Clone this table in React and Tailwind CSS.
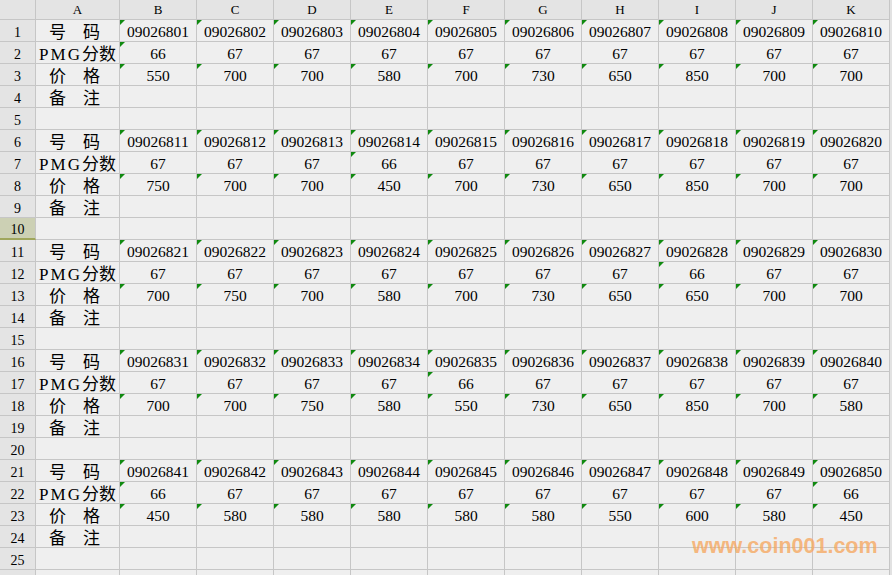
import React from "react";

const letters = ["A", "B", "C", "D", "E", "F", "G", "H", "I", "J", "K"];

// one block = 号码 / PMG分数 / 价格 / 备注 / blank
const blocks = [
  {
    start: 9026801,
    pmg: [66, 67, 67, 67, 67, 67, 67, 67, 67, 67],
    price: [550, 700, 700, 580, 700, 730, 650, 850, 700, 700],
  },
  {
    start: 9026811,
    pmg: [67, 67, 67, 66, 67, 67, 67, 67, 67, 67],
    price: [750, 700, 700, 450, 700, 730, 650, 850, 700, 700],
  },
  {
    start: 9026821,
    pmg: [67, 67, 67, 67, 67, 67, 67, 66, 67, 67],
    price: [700, 750, 700, 580, 700, 730, 650, 650, 700, 700],
  },
  {
    start: 9026831,
    pmg: [67, 67, 67, 67, 66, 67, 67, 67, 67, 67],
    price: [700, 700, 750, 580, 550, 730, 650, 850, 700, 580],
  },
  {
    start: 9026841,
    pmg: [66, 67, 67, 67, 67, 67, 67, 67, 67, 66],
    price: [450, 580, 580, 580, 580, 580, 550, 600, 580, 450],
  },
];

const serif = "font-['Liberation_Serif','Noto_Sans_CJK_SC',serif]";

function Flag() {
  return (
    <span className="absolute left-0 top-0 w-0 h-0 border-t-[5px] border-r-[5px] border-t-[#108a10] border-r-transparent" />
  );
}

function Cell({ children, flag, wide }) {
  return (
    <div
      className={`relative flex items-center justify-center pt-[3px] border-r border-b border-[#c6c6c6] bg-[#efefef] text-[15.5px] text-black whitespace-nowrap overflow-hidden ${
        wide ? "w-[84px]" : "w-[77px]"
      }`}
    >
      {flag && <Flag />}
      {children}
    </div>
  );
}

function RowHead({ n, hidden }) {
  const sel = n === 10;
  return (
    <div
      className={`w-[36px] flex items-center justify-center pt-[3px] text-[14px] text-black ${
        sel
          ? "bg-[#ccd0b4] border-r border-[#c6c6c6] border-b-2 border-b-[#9fa65c]"
          : "bg-[#e4e4e4] border-r border-b border-[#c6c6c6]"
      }`}
    >
      {hidden ? "" : n}
    </div>
  );
}

function buildRows() {
  const rows = [];
  blocks.forEach((b) => {
    const codes = Array.from({ length: 10 }, (_, i) => "0" + (b.start + i));
    rows.push({ label: "号　码", cells: codes.map((c) => [c, true]) });
    rows.push({ label: "pmg", cells: b.pmg.map((v) => [v, v === 66]) });
    rows.push({ label: "价　格", cells: b.price.map((v) => [v, true]) });
    rows.push({ label: "备　注", cells: Array(10).fill(["", false]) });
    rows.push({ label: "", cells: Array(10).fill(["", false]) });
  });
  // partial row peeking in at the bottom edge
  rows.push({ label: "", cells: Array(10).fill(["", false]), peek: true });
  return rows;
}

export default function App() {
  const rows = buildRows();

  return (
    <div className={`relative w-[892px] h-[575px] overflow-hidden bg-[#e2e2e2] ${serif}`}>
      {/* column headers */}
      <div className="flex h-[20px]">
        <div className="w-[36px] bg-[#e4e4e4] border-r border-b border-[#c6c6c6]" />
        {letters.map((l, i) => (
          <div
            key={l}
            className={`flex items-center justify-center pt-[1px] bg-[#e4e4e4] border-r border-b border-[#c6c6c6] text-[13px] text-black ${
              i === 0 ? "w-[84px]" : "w-[77px]"
            }`}
          >
            {l}
          </div>
        ))}
      </div>

      {rows.map((r, idx) => (
        <div key={idx} className="flex h-[22px]">
          <RowHead n={idx + 1} hidden={r.peek} />
          <Cell wide>
            <span className="text-[17px] leading-none pr-[6px]">
              {r.label === "pmg" ? (
                <span className="pl-[6px]">
                  <span className="tracking-[2px]">PMG</span>分数
                </span>
              ) : (
                r.label
              )}
            </span>
          </Cell>
          {r.cells.map(([v, f], i) => (
            <Cell key={i} flag={f}>
              {v}
            </Cell>
          ))}
        </div>
      ))}

      {/* watermark */}
      <div className="absolute left-[692px] top-[536px] text-[21.5px] leading-[21px] font-bold font-['Liberation_Sans',Arial,sans-serif] text-[#f6a860]/80">
        www.coin001.com
      </div>
    </div>
  );
}
